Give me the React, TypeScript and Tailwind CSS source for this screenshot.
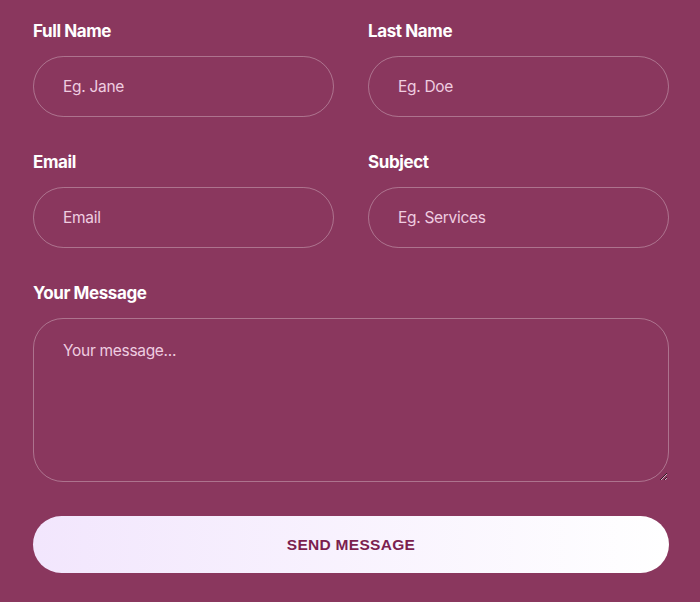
import React from "react";

const labelCls = "block text-[17px] leading-[22px] font-bold text-white mb-[14px] tracking-[-0.4px]";
const inputCls =
  "block w-full h-[61px] rounded-full border border-white/30 bg-transparent px-[29px] text-[15.5px] tracking-[-0.3px] text-white placeholder:text-[#efcde0] outline-none";

function Field({ label, placeholder }: { label: string; placeholder: string }) {
  return (
    <div>
      <label className={labelCls}>{label}</label>
      <input className={inputCls} placeholder={placeholder} />
    </div>
  );
}

export default function App() {
  return (
    <div
      className="min-h-[602px] w-[700px] bg-[#8a375e] pl-[33px] pr-[31px] pt-[20px] pb-[29px]"
      style={{ fontFamily: "Inter, 'Liberation Sans', sans-serif" }}
    >
      <div className="grid grid-cols-2 gap-x-[34px] gap-y-[34px]">
        <Field label="Full Name" placeholder="Eg. Jane" />
        <Field label="Last Name" placeholder="Eg. Doe" />
        <Field label="Email" placeholder="Email" />
        <Field label="Subject" placeholder="Eg. Services" />
        <div className="col-span-2">
          <label className={labelCls}>Your Message</label>
          <textarea
            className="block w-full h-[164px] rounded-[30px] border border-white/30 bg-transparent px-[29px] py-[20px] text-[15.5px] tracking-[-0.3px] text-white placeholder:text-[#efcde0] outline-none"
            placeholder="Your message..."
          />
        </div>
        <div className="col-span-2">
          <button
            className="w-full h-[57px] rounded-full bg-gradient-to-r from-[#f2e6fd] to-white text-[15.5px] font-bold tracking-[0.3px] text-[#7c1f4f]"
            style={{ fontFamily: "'Liberation Sans', Arial, sans-serif" }}
          >
            SEND MESSAGE
          </button>
        </div>
      </div>
    </div>
  );
}
